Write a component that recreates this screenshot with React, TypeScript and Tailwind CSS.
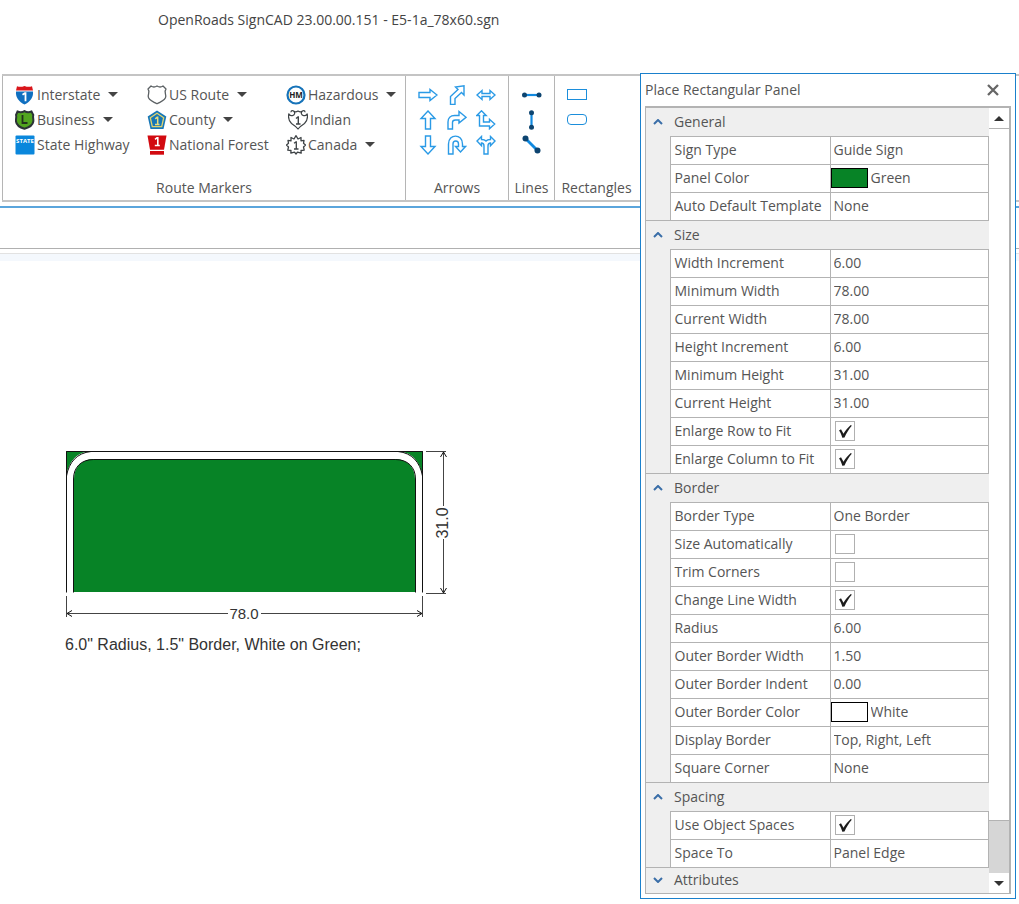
import React, { useState } from 'react';

type Property = {
  label: string;
  kind: 'text' | 'choice' | 'color' | 'check';
  value: string | boolean;
};

type Section = { title: string; open: boolean; rows: Property[] };

const SECTIONS: Section[] = [
  {
    title: 'General',
    open: true,
    rows: [
      { label: 'Sign Type', kind: 'choice', value: 'Guide Sign' },
      { label: 'Panel Color', kind: 'color', value: 'Green' },
      { label: 'Auto Default Template', kind: 'choice', value: 'None' },
    ],
  },
  {
    title: 'Size',
    open: true,
    rows: [
      { label: 'Width Increment', kind: 'text', value: '6.00' },
      { label: 'Minimum Width', kind: 'text', value: '78.00' },
      { label: 'Current Width', kind: 'text', value: '78.00' },
      { label: 'Height Increment', kind: 'text', value: '6.00' },
      { label: 'Minimum Height', kind: 'text', value: '31.00' },
      { label: 'Current Height', kind: 'text', value: '31.00' },
      { label: 'Enlarge Row to Fit', kind: 'check', value: true },
      { label: 'Enlarge Column to Fit', kind: 'check', value: true },
    ],
  },
  {
    title: 'Border',
    open: true,
    rows: [
      { label: 'Border Type', kind: 'choice', value: 'One Border' },
      { label: 'Size Automatically', kind: 'check', value: false },
      { label: 'Trim Corners', kind: 'check', value: false },
      { label: 'Change Line Width', kind: 'check', value: true },
      { label: 'Radius', kind: 'text', value: '6.00' },
      { label: 'Outer Border Width', kind: 'text', value: '1.50' },
      { label: 'Outer Border Indent', kind: 'text', value: '0.00' },
      { label: 'Outer Border Color', kind: 'color', value: 'White' },
      { label: 'Display Border', kind: 'choice', value: 'Top, Right, Left' },
      { label: 'Square Corner', kind: 'choice', value: 'None' },
    ],
  },
  {
    title: 'Spacing',
    open: true,
    rows: [
      { label: 'Use Object Spaces', kind: 'check', value: true },
      { label: 'Space To', kind: 'choice', value: 'Panel Edge' },
    ],
  },
  { title: 'Attributes', open: false, rows: [] },
];

// --- Route marker icons ---

const Interstate = () => (
  <svg width="20" height="20" viewBox="0 0 20 20">
    <path d="M1 6.500h17c.6 6-3 10.500-8.500 13C4 17 .4 12.500 1 6.500z" fill="#0f6fc0" />
    <path d="M2 1.200c2.500 1 5 .8 7.500-.3 2.500 1.100 5 1.300 7.500.3l1 4.300H1z" fill="#d9161c" />
    <path d="M7.500 9.800l2.400-1.600h.6v8" fill="none" stroke="#fff" strokeWidth="1.800" />
  </svg>
);

const Business = () => (
  <svg width="20" height="20" viewBox="0 0 20 20">
    <path
      d="M2.500 1.500c2.500 1 4.800.9 7-.4 2.200 1.300 4.500 1.400 7 .4l1.800 3.500c-.8 2 .4 4 0 6.500-.5 3.500-4.500 6-8.800 7.300C5.200 17.500 1.500 15 1 11.500c-.4-2.500.8-4.500 0-6.500z"
      fill="#52a51f"
      stroke="#2c3337"
      strokeWidth="2"
    />
    <path d="M7.500 5v8h5" fill="none" stroke="#22331c" strokeWidth="1.800" />
  </svg>
);

const StateHighway = () => (
  <svg width="20" height="20" viewBox="0 0 20 20">
    <rect x="0.500" y="0.500" width="19" height="19" rx="1" fill="#0a87dc" />
    <text x="10" y="8" fontSize="6" fontWeight="bold" textAnchor="middle" fill="#fff">STATE</text>
  </svg>
);

const UsRoute = () => (
  <svg width="20" height="20" viewBox="0 0 20 20">
    <path
      d="M4 1c1.800 1.300 4 1.300 6 0 2 1.300 4.200 1.300 6 0l3 3c-2 2.300-.3 4.700-.2 7.300 0 4.200-4.800 5.200-8.800 7.500-4-2.300-8.800-3.300-8.800-7.500C1.300 8.700 3 6.300 1 4z"
      fill="#fff"
      stroke="#5b6063"
      strokeWidth="1.300"
      strokeLinejoin="round"
    />
  </svg>
);

const County = () => (
  <svg width="20" height="20" viewBox="0 0 20 20">
    <path d="M10 .5l9.300 6-2.800 12.500h-13L.7 6.500z" fill="#1677b8" />
    <path d="M10 3.300l6.700 4.400-2 9H5.300l-2-9z" fill="none" stroke="#e2d36c" strokeWidth="1.300" />
    <path d="M8.200 8.800l2-1.500h.5v7.200M8 14.500h4.500" fill="none" stroke="#e9dc7d" strokeWidth="1.500" />
  </svg>
);

const NationalForest = () => (
  <svg width="20" height="20" viewBox="0 0 20 20">
    <path d="M.5.500h19l-2.500 14.200H3z" fill="#d20a10" />
    <path d="M3 16h14v3.700H3z" fill="#d20a10" />
    <path d="M8 4.300l2-1.500h.8v7.800M7.800 10.500h5" fill="none" stroke="#fff" strokeWidth="1.600" />
  </svg>
);

const Hazardous = () => (
  <svg width="20" height="20" viewBox="0 0 20 20">
    <circle cx="10" cy="10" r="8.500" fill="#fff" stroke="#1673b9" strokeWidth="2.200" />
    <text x="10" y="13" fontSize="8" fontWeight="bold" textAnchor="middle" fill="#222">HM</text>
  </svg>
);

const Indian = () => (
  <svg className="ml-0.5" width="20" height="20" viewBox="0 0 20 20" fill="none" stroke="#3d4245">
    <path
      d="M4 5.500C6.800 5.800 7.500 2.500 5.500 1 4 .2 2.800 1 3.200 2.200M4 5.500C2.500 5.800 1.200 5 .8 3.800.2 7 .8 11 3.500 13.500 5.800 15 8 16.500 10 19c2-2.500 4.200-4 6.500-5.500C19.200 11 19.800 7 19.200 3.800 18.800 5 17.500 5.800 16 5.500M16 5.500C13.200 5.800 12.500 2.500 14.500 1c1.500-.8 2.700 0 2.300 1.200M5.500 1c1.500 1.300 3 1 4.500 0 1.500 1 3 1.300 4.500 0"
      strokeWidth="1.200"
      strokeLinejoin="round"
    />
    <path d="M8 8.500l2-1.500h.3v7M8 14h4.500" strokeWidth="1.400" />
  </svg>
);

const Canada = () => (
  <svg width="20" height="20" viewBox="0 0 20 20">
    <path
      d="M10 .7l2 3.300 3-1.500v3.300l3-.5-.5 3 2 1.700-2 2 .7 3.200-3.200.3.200 2.700-3.700-1L10 19l-1.500-1.800-3.700 1 .2-2.700-3.200-.3.700-3.200-2-2 2-1.700-.5-3 3 .5V2.500L8 4z"
      fill="#fff"
      stroke="#3d4245"
      strokeWidth="1.300"
      strokeLinejoin="round"
    />
    <path d="M8 8.300L10 7h.3v7M8 14h4.500" fill="none" stroke="#3d4245" strokeWidth="1.300" />
  </svg>
);

const MARKERS = [
  [
    { name: 'Interstate', Icon: Interstate, menu: true },
    { name: 'Business', Icon: Business, menu: true },
    { name: 'State Highway', Icon: StateHighway, menu: false },
  ],
  [
    { name: 'US Route', Icon: UsRoute, menu: true },
    { name: 'County', Icon: County, menu: true },
    { name: 'National Forest', Icon: NationalForest, menu: false },
  ],
  [
    { name: 'Hazardous', Icon: Hazardous, menu: true },
    { name: 'Indian', Icon: Indian, menu: false },
    { name: 'Canada', Icon: Canada, menu: true },
  ],
];

const ARROWS = [
  { name: 'Right', d: 'M1 7.500h11V4.500L19 10l-7 5.500v-3H1z' },
  { name: 'Up right', d: 'M3.500 19.500V11.500L11 4.500 8.500 2 17 .800V10l-2.500-2.500-6.500 6v6z' },
  { name: 'Left right', d: 'M1 10l5-4.500V8.500h8V5.500l5 4.500-5 4.500V11.500H6v3z' },
  { name: 'Up', d: 'M10 1l7 7.500h-4.500v10.500h-5V8.500H3z' },
  { name: 'Turn right', d: 'M1 19v-7c0-4 2.500-6.500 6.500-6.500H12V1.500l7 5.800-7 5.800V10H8.500C6.500 10 5.500 11 5.500 12.500V19z' },
  { name: 'Up and right', d: 'M3.500 16V5.500H.8L5.500.8l4.700 4.700H7.500V12h6V9.300l5.200 4.700-5.200 4.700V16z' },
  { name: 'Down', d: 'M10 19l7-7.500h-4.500V1h-5v10.500H3z' },
  { name: 'U turn', d: 'M1.500 19V9c0-10.500 14-10.500 14 0v2.500h3L13.500 17l-5-5.500h3V9c0-4-5.500-4-5.500 0v10z' },
  { name: 'Split', d: 'M8 19v-8c0-2-.8-3-2.500-3v2.800L1 6l4.500-4.500v3c2 0 3.500.3 4.500 1.500 1-1.200 2.500-1.500 4.500-1.500v-3L19 6l-4.500 4.800V8C12.800 8 12 9 12 11v8z' },
];

const Group = ({ label, className, children }: { label: string; className?: string; children: React.ReactNode }) => (
  <section className={`flex flex-col justify-between border-l border-[#b5b5b5] pt-1.5 pb-0.5 ${className || ''}`}>
    {children}
    <h2 className="text-center leading-5">{label}</h2>
  </section>
);

const Ribbon = () => (
  <div className="ml-0.5 flex h-32 border-y-2 border-[#c4c4c4]">
    <Group label="Route Markers" className="w-[403px] shrink-0">
      <div className="grid grid-cols-[132px_139px_auto] pl-3">
        {MARKERS.map((column, i) => (
          <div key={i} className="flex flex-col items-start">
            {column.map(({ name, Icon, menu }) => (
              <button key={name} className="flex h-[25px] items-center gap-0.5 whitespace-nowrap">
                <Icon />
                {name}
                {menu && (
                  <svg className="ml-1.5" width="10" height="5" viewBox="0 0 10 5">
                    <path d="M0 0h10L5 5z" fill="#444" />
                  </svg>
                )}
              </button>
            ))}
          </div>
        ))}
      </div>
    </Group>
    <Group label="Arrows" className="w-[103px] shrink-0">
      <div className="grid grid-cols-3 justify-items-center px-2">
        {ARROWS.map(a => (
          <button key={a.name} aria-label={a.name} className="flex h-[25px] items-center">
            <svg width="20" height="20" viewBox="0 0 20 20">
              <path d={a.d} fill="#fff" stroke="#2a9ae6" strokeWidth="1.400" />
            </svg>
          </button>
        ))}
      </div>
    </Group>
    <Group label="Lines" className="w-[46px] shrink-0">
      <div className="flex flex-col items-center">
        <button aria-label="Horizontal line" className="flex h-[25px] items-center">
          <svg width="20" height="20" viewBox="0 0 20 20">
            <path d="M3 10h14" stroke="#1089e0" strokeWidth="2.200" />
            <circle cx="2.500" cy="10" r="2.500" fill="#0d4470" />
            <circle cx="17" cy="10" r="2.500" fill="#0d4470" />
          </svg>
        </button>
        <button aria-label="Vertical line" className="flex h-[25px] items-center">
          <svg width="20" height="20" viewBox="0 0 20 20">
            <path d="M9.500 3v14" stroke="#1089e0" strokeWidth="2.200" />
            <circle cx="9.500" cy="2.700" r="2.500" fill="#0d4470" />
            <circle cx="9.500" cy="17.300" r="2.500" fill="#0d4470" />
          </svg>
        </button>
        <button aria-label="Diagonal line" className="flex h-[25px] items-center">
          <svg width="20" height="20" viewBox="0 0 20 20">
            <path d="M3.500 3.500l12 12" stroke="#1089e0" strokeWidth="2.800" />
            <circle cx="3.500" cy="3.500" r="3" fill="#0d4470" />
            <circle cx="15.500" cy="15.500" r="3" fill="#0d4470" />
          </svg>
        </button>
      </div>
    </Group>
    <Group label="Rectangles" className="w-[84px] shrink-0">
      <div className="flex flex-col items-start pl-3">
        <button aria-label="Rectangle" className="flex h-[25px] items-center">
          <span className="h-[11px] w-5 border border-[#1c8edb]" />
        </button>
        <button aria-label="Rounded rectangle" className="flex h-[25px] items-center">
          <span className="h-[11px] w-5 rounded border border-[#1c8edb]" />
        </button>
      </div>
    </Group>
  </div>
);

const SignDrawing = () => (
  <figure className="mt-[184px] ml-[60px]">
    <svg width="400" height="180" viewBox="0 0 400 180" fill="none" stroke="#111" strokeWidth="1">
      {/* Panel */}
      <rect x="6" y="6" width="357" height="141" fill="#078326" stroke="none" />
      <path d="M6 148V32.500C8 18 16 7 30 6.500h309c14 .5 22 12 24 26V148h-8V34c0-12-8-20-20-20H34c-12 0-20 8-20 20v114z" fill="#fff" stroke="none" />
      <path d="M6.500 147.500V31C9 17 17 8 31 6.500M362.500 147.500V31C360 17 352 8 338 6.500" />
      <path d="M6.500 31V6.500h356V31" />
      <path d="M13.500 147.500V34c0-12 8-19.500 20-19.500h302c12 0 20 7.500 20 19.500v113.500" />
      {/* Width dimension */}
      <path d="M6.500 151v21M362.500 151v21M7 168.500h161M201 168.500h161" stroke="#444" />
      <path d="M12 165.500l-5 3 5 3M357 165.500l5 3-5 3" />
      <text x="184" y="174" textAnchor="middle" fontSize="15" fill="#333" stroke="none">78.0</text>
      {/* Height dimension */}
      <path d="M366 6.500h20M366 148.500h20M383.500 7v54M383.500 94v54" stroke="#444" />
      <path d="M380.500 12l3-5 3 5M380.500 143l3 5 3-5" />
      <text transform="translate(388 78) rotate(-90)" textAnchor="middle" fontSize="16" fill="#333" stroke="none">31.0</text>
    </svg>
    <figcaption className="mt-2 ml-[5px] text-base leading-6 text-[#333]">
      6.0" Radius, 1.5" Border, White on Green;
    </figcaption>
  </figure>
);

const PropertyValue = ({ id, row }: { id: string; row: Property }) => {
  const [value, setValue] = useState(row.value);

  if (row.kind === 'check') {
    return (
      <span className="relative ml-1 block size-5">
        <input
          id={id}
          type="checkbox"
          checked={value as boolean}
          onChange={e => setValue(e.target.checked)}
          className="peer block size-5 appearance-none border border-[#b0b0b0] bg-white"
        />
        <svg className="pointer-events-none absolute inset-0 hidden peer-checked:block" width="20" height="20" viewBox="0 0 20 20">
          <path d="M4 9.500l2-1.300 2.500 4.500C10.500 9 13 6.500 15.800 4l1 .7C13.500 8.500 11.500 12 9.500 16.500l-2.200.2C6.500 14 5.500 11.500 4 9.500z" fill="#1c1c1c" />
        </svg>
      </span>
    );
  }

  if (row.kind === 'text') {
    return (
      <input
        id={id}
        value={value as string}
        onChange={e => setValue(e.target.value)}
        className="block w-full bg-transparent pl-[3px] outline-none"
      />
    );
  }

  return (
    <span className="flex items-center">
      {row.kind === 'color' && (
        <span className={`h-5 w-[37px] shrink-0 border border-black ${value === 'Green' ? 'bg-[#078326]' : 'bg-white'}`} />
      )}
      <select
        id={id}
        value={value as string}
        onChange={e => setValue(e.target.value)}
        className="w-full appearance-none bg-transparent pl-[3px] outline-none"
      >
        <option>{row.value as string}</option>
      </select>
    </span>
  );
};

const PropertySection = ({ section, first }: { section: Section; first: boolean }) => {
  const [open, setOpen] = useState(section.open);
  const height = first ? 'h-7' : open ? 'h-[29px] border-t' : 'h-[26px] border-t';
  return (
    <tbody>
      <tr className={`border-[#b3b3b3] bg-[#efefef] ${height}`}>
        <th colSpan={3} className="p-0 text-left font-normal">
          <button onClick={() => setOpen(!open)} aria-expanded={open} className="flex w-full items-center">
            <span className="flex w-7 justify-center pr-1">
              <svg className={open ? '' : 'rotate-180'} width="10" height="6" viewBox="0 0 10 6">
                <path d="M1 5l4-4 4 4" fill="none" stroke="#3a6ea8" strokeWidth="2" />
              </svg>
            </span>
            {section.title}
          </button>
        </th>
      </tr>
      {open && section.rows.map((row, i) => {
        const id = `${section.title}-${row.label}`.replace(/ /g, '-');
        return (
          <tr key={row.label} className="h-7">
            {i === 0 && <td rowSpan={section.rows.length} className="bg-[#efefef] p-0" />}
            <th className="border-t border-l border-[#b3b3b3] p-0 pl-1 text-left font-normal whitespace-nowrap">
              <label htmlFor={id}>{row.label}</label>
            </th>
            <td className="border-t border-x border-[#b3b3b3] p-0">
              <PropertyValue id={id} row={row} />
            </td>
          </tr>
        );
      })}
    </tbody>
  );
};

const PropertyPanel = () => (
  <aside className="absolute top-[73px] right-[3px] flex w-[376px] flex-col border border-[#1a80cc] bg-white px-1 pb-1">
    <header className="flex h-8 items-center justify-between pr-3">
      <h2>Place Rectangular Panel</h2>
      <button aria-label="Close">
        <svg width="12" height="12" viewBox="0 0 12 12">
          <path d="M1 1l10 10M11 1L1 11" stroke="#666" strokeWidth="2.300" />
        </svg>
      </button>
    </header>
    <div className="flex border border-t-2 border-r-2 border-[#b3b3b3]">
      <div className="min-w-0 flex-1">
        <table className="w-full table-fixed border-collapse">
          <colgroup>
            <col className="w-6" />
            <col className="w-40" />
            <col />
          </colgroup>
          {SECTIONS.map((s, i) => <PropertySection key={s.title} section={s} first={i === 0} />)}
        </table>
      </div>
      {/* Scroll bar */}
      <div className="flex w-5 flex-col bg-[#d6d6d6]">
        <button aria-label="Scroll up" className="flex h-5 items-center justify-center bg-white">
          <svg width="10" height="5" viewBox="0 0 10 5"><path d="M5 0l5 5H0z" fill="#333" /></svg>
        </button>
        <div className="flex-1">
          <div className="h-[93%] border-y border-[#b3b3b3] bg-white" />
        </div>
        <button aria-label="Scroll down" className="flex h-5 items-center justify-center bg-white">
          <svg width="10" height="5" viewBox="0 0 10 5"><path d="M0 0h10L5 5z" fill="#333" /></svg>
        </button>
      </div>
    </div>
  </aside>
);

function App() {
  return (
    <div className="relative min-h-screen overflow-hidden bg-white font-['Open_Sans','Noto_Sans',sans-serif] text-sm text-[#555]">
      <header className="flex h-[74px] items-start pt-[10px] pl-[158px]">
        <h1 className="leading-5 text-[#444]">OpenRoads SignCAD 23.00.00.151 - E5-1a_78x60.sgn</h1>
      </header>

      <Ribbon />

      {/* Document strip */}
      <div className="mt-1 h-[43px] border-t-2 border-b border-t-[#5aa5dc] border-b-[#b0b0b0]" />
      <div className="mt-1 h-2 border-t border-[#e2e2e2] bg-[#f4f8fd]" />

      <main className="font-['Liberation_Sans',Arial,sans-serif]">
        <SignDrawing />
      </main>

      <PropertyPanel />
    </div>
  );
}

export default App;
